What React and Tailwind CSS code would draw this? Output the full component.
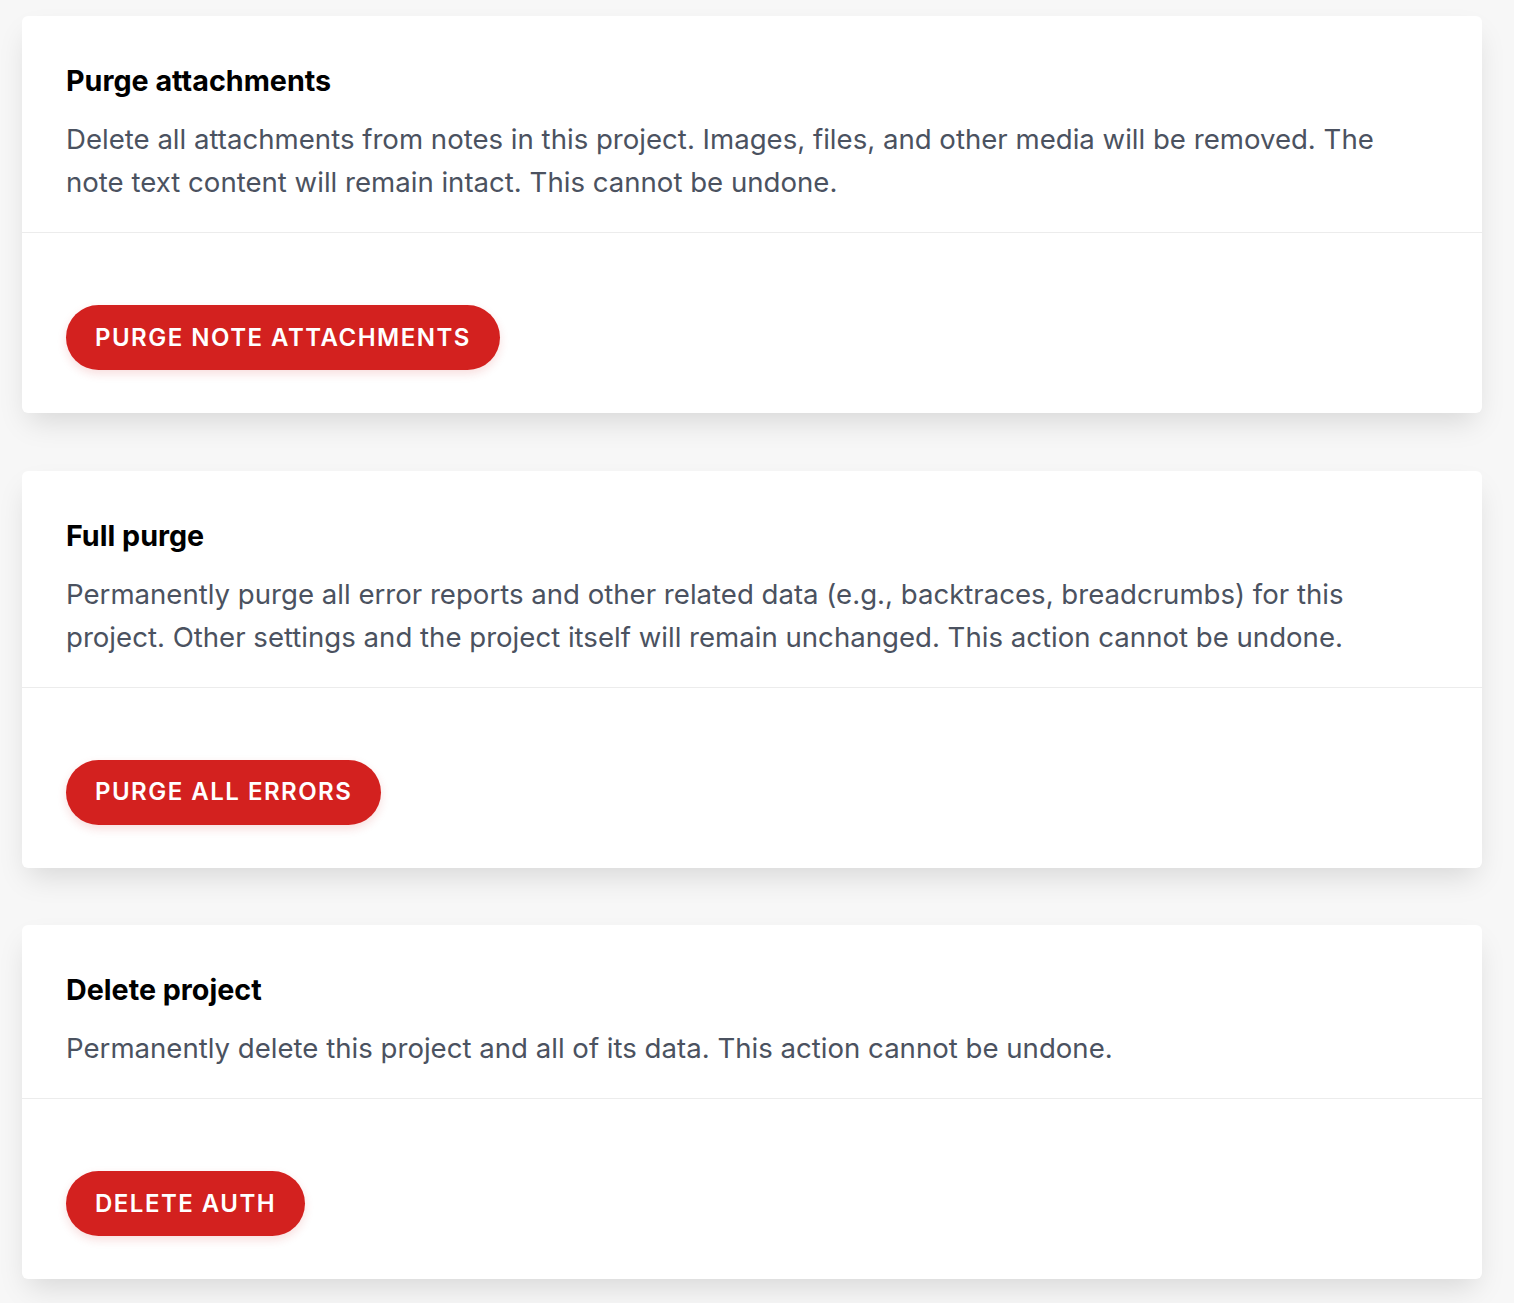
import React from 'react'

const sections = [
  {
    title: 'Purge attachments',
    body: 'Delete all attachments from notes in this project. Images, files, and other media will be removed. The note text content will remain intact. This cannot be undone.',
    action: 'Purge note attachments',
  },
  {
    title: 'Full purge',
    body: 'Permanently purge all error reports and other related data (e.g., backtraces, breadcrumbs) for this project. Other settings and the project itself will remain unchanged. This action cannot be undone.',
    action: 'Purge all errors',
  },
  {
    title: 'Delete project',
    body: 'Permanently delete this project and all of its data. This action cannot be undone.',
    action: 'Delete auth',
  },
]

function DangerCard({ title, body, action }) {
  return (
    <div className="bg-white rounded-md shadow-[0_14px_28px_-6px_rgba(0,0,0,0.13)]">
      {/* Header */}
      <div className="px-11 pt-[47px] pb-[28px] border-b border-[#ececec]">
        <h2 className="text-[28.7px] leading-[36px] font-bold text-black">{title}</h2>
        <p className="mt-[19px] text-[27.6px] leading-[43px] text-[#4b5260] max-w-[1340px]">{body}</p>
      </div>

      {/* Action */}
      <div className="px-11 pt-[72px] pb-[43px]">
        <button
          type="button"
          className="h-[65px] px-[29px] rounded-full bg-[#d3211f] text-white text-[24px] font-semibold uppercase tracking-[0.062em] shadow-[0_4px_10px_rgba(211,33,31,0.15)]"
        >
          {action}
        </button>
      </div>
    </div>
  )
}

export default function App() {
  return (
    <div className="min-h-screen bg-[#f7f7f7] font-['Inter',sans-serif] antialiased">
      <div className="w-[1460px] ml-[22px] pt-4 pb-6 flex flex-col gap-[57.5px]">
        {sections.map(s => (
          <DangerCard key={s.title} {...s} />
        ))}
      </div>
    </div>
  )
}
